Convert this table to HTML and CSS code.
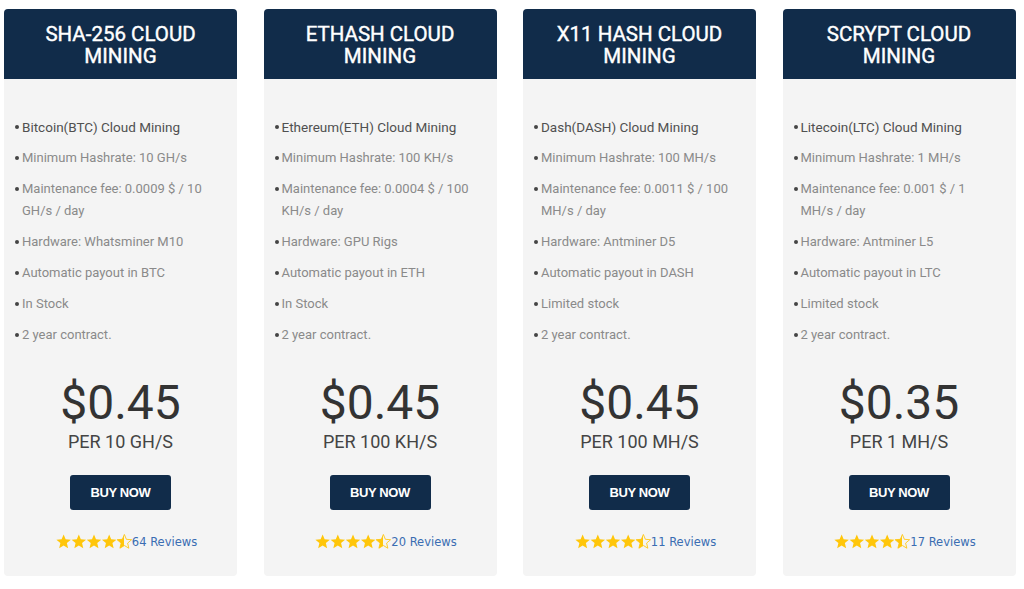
FILE: index.html
```html
<!DOCTYPE html>
<html>
<head>
<meta charset="utf-8">
<link rel="stylesheet" href="styles.css">
</head>
<body>
<svg class="defs" width="0" height="0" aria-hidden="true">
  <defs>
    <path id="st" d="M8 0.5L10.12 5.59L15.61 6.03L11.42 9.61L12.7 14.97L8 12.1L3.3 14.97L4.58 9.61L0.39 6.03L5.88 5.59Z"/>
    <linearGradient id="half" x1="0" y1="0" x2="1" y2="0">
      <stop offset="0.5" stop-color="#ffc60a"/>
      <stop offset="0.5" stop-color="#ffc60a" stop-opacity="0"/>
    </linearGradient>
  </defs>
</svg>
<div class="plans">
  <div class="card">
    <div class="head"><span class="hl">SHA-256 CLOUD</span><span class="hl">MINING</span></div>
    <ul class="feat">
      <li class="main">Bitcoin(BTC) Cloud Mining</li>
      <li>Minimum Hashrate: 10 GH/s</li>
      <li>Maintenance fee: 0.0009 $ / 10 GH/s / day</li>
      <li>Hardware: Whatsminer M10</li>
      <li>Automatic payout in BTC</li>
      <li>In Stock</li>
      <li>2 year contract.</li>
    </ul>
    <div class="price">$0.45</div>
    <div class="per">PER 10 GH/S</div>
    <a class="buy">BUY NOW</a>
    <div class="rating"><svg class="stars" viewBox="0 0 80 16"><use href="#st" fill="#ffc60a"/><use href="#st" x="16" fill="#ffc60a"/><use href="#st" x="32" fill="#ffc60a"/><use href="#st" x="48" fill="#ffc60a"/><use href="#st" x="64" fill="url(#half)" stroke="#ffc60a" stroke-width="0.9"/></svg><span class="rev">64 Reviews</span></div>
  </div>
  <div class="card">
    <div class="head"><span class="hl">ETHASH CLOUD</span><span class="hl">MINING</span></div>
    <ul class="feat">
      <li class="main">Ethereum(ETH) Cloud Mining</li>
      <li>Minimum Hashrate: 100 KH/s</li>
      <li>Maintenance fee: 0.0004 $ / 100 KH/s / day</li>
      <li>Hardware: GPU Rigs</li>
      <li>Automatic payout in ETH</li>
      <li>In Stock</li>
      <li>2 year contract.</li>
    </ul>
    <div class="price">$0.45</div>
    <div class="per">PER 100 KH/S</div>
    <a class="buy">BUY NOW</a>
    <div class="rating"><svg class="stars" viewBox="0 0 80 16"><use href="#st" fill="#ffc60a"/><use href="#st" x="16" fill="#ffc60a"/><use href="#st" x="32" fill="#ffc60a"/><use href="#st" x="48" fill="#ffc60a"/><use href="#st" x="64" fill="url(#half)" stroke="#ffc60a" stroke-width="0.9"/></svg><span class="rev">20 Reviews</span></div>
  </div>
  <div class="card">
    <div class="head"><span class="hl">X11 HASH CLOUD</span><span class="hl">MINING</span></div>
    <ul class="feat">
      <li class="main">Dash(DASH) Cloud Mining</li>
      <li>Minimum Hashrate: 100 MH/s</li>
      <li>Maintenance fee: 0.0011 $ / 100 MH/s / day</li>
      <li>Hardware: Antminer D5</li>
      <li>Automatic payout in DASH</li>
      <li>Limited stock</li>
      <li>2 year contract.</li>
    </ul>
    <div class="price">$0.45</div>
    <div class="per">PER 100 MH/S</div>
    <a class="buy">BUY NOW</a>
    <div class="rating"><svg class="stars" viewBox="0 0 80 16"><use href="#st" fill="#ffc60a"/><use href="#st" x="16" fill="#ffc60a"/><use href="#st" x="32" fill="#ffc60a"/><use href="#st" x="48" fill="#ffc60a"/><use href="#st" x="64" fill="url(#half)" stroke="#ffc60a" stroke-width="0.9"/></svg><span class="rev">11 Reviews</span></div>
  </div>
  <div class="card">
    <div class="head"><span class="hl">SCRYPT CLOUD</span><span class="hl">MINING</span></div>
    <ul class="feat">
      <li class="main">Litecoin(LTC) Cloud Mining</li>
      <li>Minimum Hashrate: 1 MH/s</li>
      <li>Maintenance fee: 0.001 $ / 1 MH/s / day</li>
      <li>Hardware: Antminer L5</li>
      <li>Automatic payout in LTC</li>
      <li>Limited stock</li>
      <li>2 year contract.</li>
    </ul>
    <div class="price">$0.35</div>
    <div class="per">PER 1 MH/S</div>
    <a class="buy">BUY NOW</a>
    <div class="rating"><svg class="stars" viewBox="0 0 80 16"><use href="#st" fill="#ffc60a"/><use href="#st" x="16" fill="#ffc60a"/><use href="#st" x="32" fill="#ffc60a"/><use href="#st" x="48" fill="#ffc60a"/><use href="#st" x="64" fill="url(#half)" stroke="#ffc60a" stroke-width="0.9"/></svg><span class="rev">17 Reviews</span></div>
  </div>
</div>
</body>
</html>
```
FILE: styles.css
```css
html, body {
  margin: 0;
  padding: 0;
  background: #fff;
  font-family: Roboto, "Liberation Sans", sans-serif;
}
.defs {
  position: absolute;
  width: 0;
  height: 0;
}
.plans {
  display: flex;
  gap: 26.5px;
  padding: 9px 0 0 4px;
}
.card {
  flex: 0 0 233px;
  height: 567px;
  background: #f4f4f4;
  border-radius: 4px;
  overflow: hidden;
  display: flex;
  flex-direction: column;
  align-items: center;
}
.head {
  align-self: stretch;
  height: 70px;
  background: #112c4a;
  color: #fff;
  font-size: 20.5px;
  font-weight: 400;
  -webkit-text-stroke: 0.4px #fff;
  line-height: 22px;
  padding-top: 1px;
  box-sizing: border-box;
  text-align: center;
  display: flex;
  flex-direction: column;
  align-items: center;
  justify-content: center;
}
.hl {
  display: block;
  height: 22px;
}
.feat {
  align-self: stretch;
  list-style: none;
  margin: 0;
  padding: 37px 23px 0 18px;
}
.feat li {
  position: relative;
  font-size: 13px;
  line-height: 22px;
  color: #8a8a8a;
  margin-bottom: 9px;
}
.feat li:last-child { margin-bottom: 0; }
.feat li::before {
  content: "";
  position: absolute;
  left: -7px;
  top: 9px;
  width: 4px;
  height: 4px;
  border-radius: 50%;
  background: #444;
}
.feat li.main {
  color: #505050;
  font-size: 13.5px;
}
.price {
  margin-top: 32px;
  font-size: 48px;
  line-height: 50px;
  font-weight: 400;
  color: #333;
}
.per {
  margin-top: 4px;
  font-size: 18px;
  line-height: 20px;
  color: #444;
}
.buy {
  margin-top: 23px;
  width: 101px;
  height: 35px;
  background: #112c4a;
  border-radius: 3px;
  color: #fff;
  font-family: "Liberation Sans", Arial, sans-serif;
  font-weight: 700;
  font-size: 13px;
  letter-spacing: -0.4px;
  display: flex;
  align-items: center;
  justify-content: center;
}
.rating {
  margin-top: 24px;
  display: flex;
  align-items: center;
  height: 16px;
  padding-left: 12px;
}
.stars {
  display: block;
  width: 76px;
  height: 15.2px;
}
.rev {
  font-family: "DejaVu Sans", Verdana, sans-serif;
  font-size: 11.5px;
  color: #3a6db2;
}
```
